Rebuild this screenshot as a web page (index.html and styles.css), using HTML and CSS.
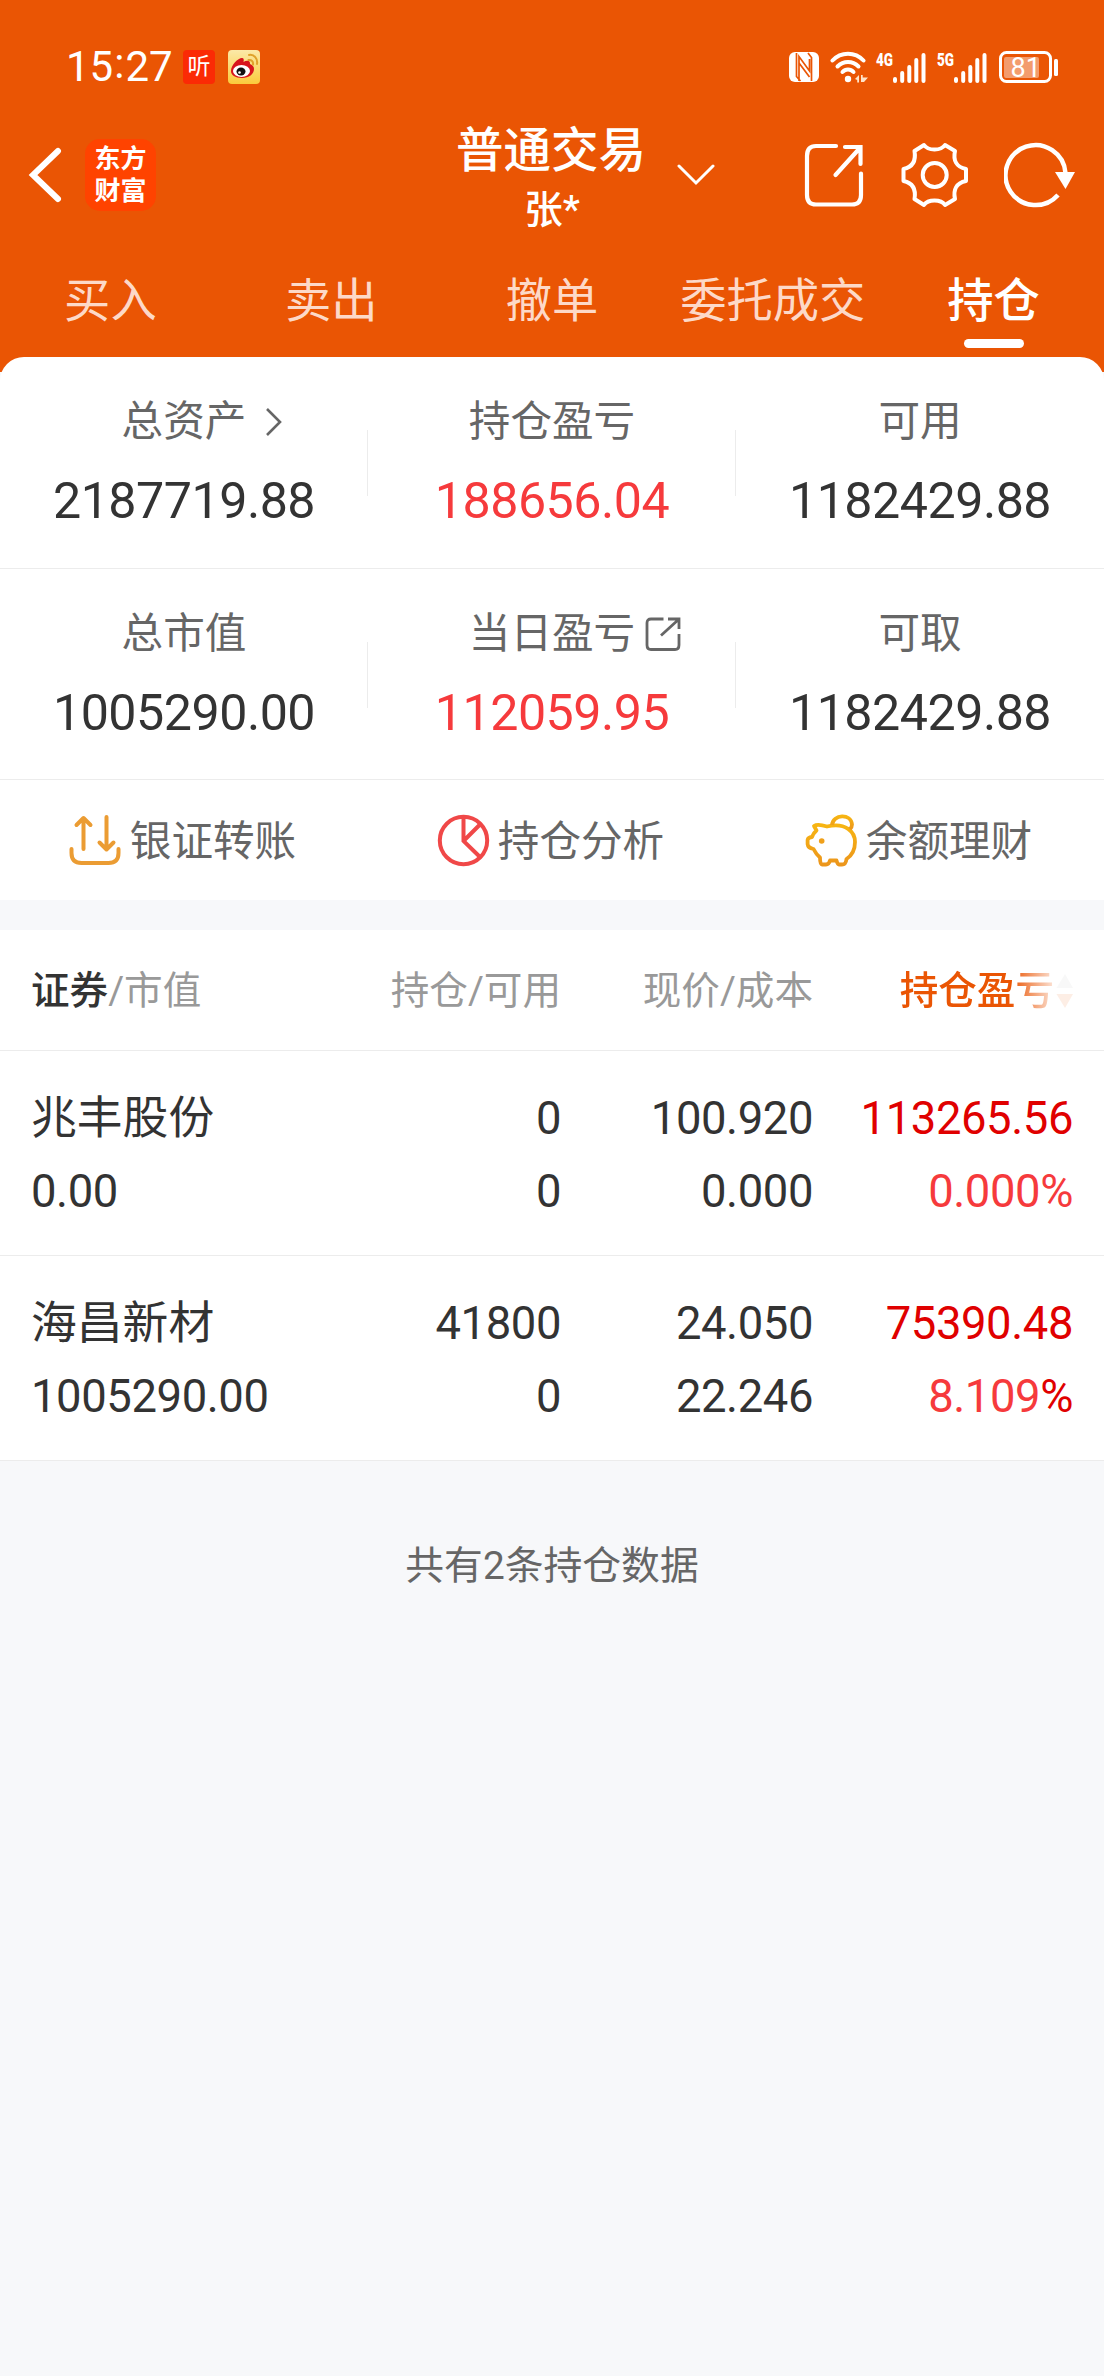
FILE: index.html
```html
<!DOCTYPE html>
<html lang="zh-CN">
  <head>
    <meta charset="UTF-8">
    <title>普通交易 - 持仓</title>
    <link rel="stylesheet" href="styles.css">
  </head>
  <body>
    <header class="header">
      <div class="status">
        <span class="time">15<span class="colon">:</span>27</span>
        <span class="app-ting">听</span>
        <svg class="app-weibo" width="32" height="34" viewBox="0 0 32 34">
          <defs>
            <linearGradient id="weibo-bg" x1="0" y1="0" x2="0" y2="1">
              <stop offset="0" stop-color="#fbe9a8"/>
              <stop offset="1" stop-color="#fbcb3c"/>
            </linearGradient>
          </defs>
          <rect width="32" height="34" rx="4" fill="url(#weibo-bg)"/>
          <path d="M3 21C3 15 10 8 14 8c2 0 2 2 1.500 4 3-2 7-2 6.500 2 3 1 4 3 4 5 0 5-5 9-12 9S3 25 3 21z" fill="#d8141c"/>
          <ellipse cx="13.500" cy="21" rx="8.500" ry="6" fill="#fff"/>
          <ellipse cx="13" cy="21.500" rx="4.500" ry="4" fill="#111"/>
          <circle cx="11.500" cy="22.500" r="1.300" fill="#fff"/>
          <path d="M20.500 10c3-.5 5 1.500 4.500 4.500M21 5c5-1 9 3.500 8 9" fill="none" stroke="#dfa12b" stroke-width="2" stroke-linecap="round"/>
        </svg>
        <div class="status-right">
          <svg width="30" height="30" viewBox="0 0 30 30">
            <rect width="30" height="30" rx="6" fill="#fff"/>
            <path d="M7.500 1v23.500l4 4.500M10 29V4.500L20.500 19V7M19 1l3.500 4.500V29M10 11l10.500 14" fill="none" stroke="#ea5504" stroke-width="1.700"/>
          </svg>
          <svg class="wifi" width="38" height="32" viewBox="0 0 38 32">
            <g fill="none" stroke="#fff" stroke-width="4" stroke-linecap="round">
              <path d="M2.500 9.500C11 .5 25 .5 33.500 9.500"/>
              <path d="M7.500 15.500c6-6 15-6 21 0"/>
              <path d="M12.500 21c3-3.500 8-3.500 11 0"/>
            </g>
            <circle cx="18" cy="28" r="3.200" fill="#fff"/>
            <path d="M25 28l4-4v7.500h-1.800V29zM31 24h1.700v2.500H38L34 31h-3z" fill="#ffe3c8"/>
          </svg>
          <svg class="signal" width="52" height="36" viewBox="-1 -2 52 36">
            <text x="0" y="15" textLength="17" lengthAdjust="spacingAndGlyphs">4G</text>
            <path d="M19 28v2M26.200 22v8M33.300 16v14M40.300 9v21M47.500 4v26"/>
          </svg>
          <svg class="signal" width="52" height="36" viewBox="-1 -2 52 36">
            <text x="0" y="15" textLength="17" lengthAdjust="spacingAndGlyphs">5G</text>
            <path d="M19 28v2M26.200 22v8M33.300 16v14M40.300 9v21M47.500 4v26"/>
          </svg>
          <svg class="battery" width="61" height="34" viewBox="0 0 61 34">
            <rect x="2.500" y="2.500" width="50" height="29" rx="6" fill="none" stroke="#fff" stroke-width="3"/>
            <rect x="6" y="7" width="35" height="21" rx="2" fill="#fff" fill-opacity=".42"/>
            <rect x="56" y="9" width="4" height="17" rx="1.500" fill="#fff"/>
            <text x="12.500" y="27">81</text>
          </svg>
        </div>
      </div>

      <div class="nav">
        <div class="nav-left">
          <svg width="34" height="56" viewBox="0 0 34 56">
            <path d="M30 4L5 28l25 24" fill="none" stroke="#fff" stroke-width="6" stroke-linecap="round" stroke-linejoin="miter"/>
          </svg>
          <div class="logo">东方<br>财富</div>
        </div>
        <div class="title">
          <div class="title-main">普通交易</div>
          <div class="title-user">张*</div>
        </div>
        <div class="nav-right">
          <svg class="arrow-down" width="38" height="22" viewBox="0 0 38 22">
            <path d="M2 2l17 17L36 2" fill="none" stroke="#fff" stroke-width="3" stroke-linecap="round"/>
          </svg>
          <svg class="icon-share" width="60" height="66" viewBox="0 0 60 66">
            <g fill="none" stroke="#fff" stroke-width="4.200" stroke-linecap="round">
              <path d="M32 4H12Q3 4 3 14v39q0 9.500 9 9.500h36q9 0 9-9.500V31.500"/>
              <path d="M41 5h15.500v17M31.500 33L55 7"/>
            </g>
          </svg>
          <svg class="icon-gear" width="70" height="66" viewBox="0 0 70 66">
            <g fill="none" stroke="#fff" stroke-width="4" stroke-linejoin="round">
              <path d="M24 3C28 9 41 9 45 3L55 9C53 18 56 25 66 27V39C56 41 53 48 55 57L45 63C41 57 28 57 24 63L14.500 57C16 48 13 41 3.500 39V27C13 25 16 18 14.500 9Z"/>
              <circle cx="34.700" cy="33" r="12"/>
            </g>
          </svg>
          <svg class="icon-refresh" width="72" height="66" viewBox="0 0 72 66">
            <path d="M54 53A30 30 0 1 1 61.500 31" fill="none" stroke="#fff" stroke-width="4.500"/>
            <path d="M51 30h20L61.500 47z" fill="#fff"/>
          </svg>
        </div>
      </div>

      <nav class="tabs">
        <a class="tab">买入</a>
        <a class="tab">卖出</a>
        <a class="tab">撤单</a>
        <a class="tab">委托成交</a>
        <a class="tab active">持仓</a>
      </nav>
    </header>

    <section class="assets">
      <div class="assets-row">
        <div class="asset">
          <div class="asset-label">总资产<svg class="more" width="18" height="30" viewBox="0 0 18 30"><path d="M2 2l13 13L2 28" fill="none" stroke="#666" stroke-width="2.600"/></svg></div>
          <div class="asset-value">2187719.88</div>
        </div>
        <div class="asset">
          <div class="asset-label">持仓盈亏</div>
          <div class="asset-value up">188656.04</div>
        </div>
        <div class="asset">
          <div class="asset-label">可用</div>
          <div class="asset-value">1182429.88</div>
        </div>
      </div>
      <div class="assets-row">
        <div class="asset">
          <div class="asset-label">总市值</div>
          <div class="asset-value">1005290.00</div>
        </div>
        <div class="asset">
          <div class="asset-label">当日盈亏<svg class="open" width="36" height="36" viewBox="0 0 36 36"><path d="M18.500 3H6Q2 3 2 7v22q0 4.500 4 4.500h24q4 0 4-4.500V18M23 3h11v10M16 19.500L33 4" fill="none" stroke="#666" stroke-width="2.800"/></svg></div>
          <div class="asset-value up">112059.95</div>
        </div>
        <div class="asset">
          <div class="asset-label">可取</div>
          <div class="asset-value">1182429.88</div>
        </div>
      </div>
      <div class="actions">
        <a class="action">
          <svg width="54" height="54" viewBox="0 0 54 54">
            <path d="M3.500 36v4q0 10 10 10h27q10 0 10-10v-4M15.500 36V5M8.500 12l7-7 7 7M38.500 4v32M31.500 29.500l7 7 7-7" fill="none" stroke="#eb9c33" stroke-width="4" stroke-linecap="round" stroke-linejoin="round"/>
          </svg>
          <span>银证转账</span>
        </a>
        <a class="action">
          <svg width="54" height="54" viewBox="0 0 54 54">
            <g fill="none" stroke="#f04848" stroke-width="4">
              <circle cx="27.500" cy="27.500" r="23.700"/>
              <path d="M27.500 4v24L44 44M27.500 28L44.500 11"/>
            </g>
          </svg>
          <span>持仓分析</span>
        </a>
        <a class="action">
          <svg width="54" height="54" viewBox="0 0 54 54">
            <defs>
              <linearGradient id="pig" x1="0" y1="0" x2="0" y2="1">
                <stop offset="0" stop-color="#f7b512"/>
                <stop offset="1" stop-color="#ec961c"/>
              </linearGradient>
            </defs>
            <g fill="none" stroke="url(#pig)" stroke-width="3.800" stroke-linejoin="round">
              <path d="M10 13C13 11 18 12 23 13.500C42 9 51 19 51 29C51 37 47 43 42.500 46C42 50 41 51.500 38 51.500H35Q33.500 51.500 32.500 47.500H26Q25 51.500 22 51.500H18Q16 51.500 16 44.500C13 42 11 39 9.500 36Q4 35 3.600 31V27Q4 24.500 8 24Q9.500 20 12.500 17.500Z"/>
              <path d="M28 12C29 1 47 0 48 11.500Q48 14 46 16"/>
            </g>
            <circle cx="17.700" cy="28" r="2.800" fill="#f0a01a"/>
          </svg>
          <span>余额理财</span>
        </a>
      </div>
    </section>

    <section class="holdings">
      <div class="row head">
        <div class="col"><b>证券</b>/市值</div>
        <div class="col">持仓/可用</div>
        <div class="col">现价/成本</div>
        <div class="col sorted">持仓盈亏<svg width="19" height="36" viewBox="0 0 19 36"><path d="M2.500 15L11 1l8 14z" fill="#bbb"/><path d="M2.500 21H19l-8 14z" fill="#ea5504"/></svg></div>
      </div>
      <div class="row">
        <div class="col"><span class="name">兆丰股份</span><br>0.00</div>
        <div class="col">0<br>0</div>
        <div class="col">100.920<br>0.000</div>
        <div class="col profit">113265.56<br><span class="rate">0.000%</span></div>
      </div>
      <div class="row">
        <div class="col"><span class="name">海昌新材</span><br>1005290.00</div>
        <div class="col">41800<br>0</div>
        <div class="col">24.050<br>22.246</div>
        <div class="col profit">75390.48<br><span class="rate">8.109</span>%</div>
      </div>
    </section>

    <p class="total">共有2条持仓数据</p>
  </body>
</html>
```

FILE: styles.css
```css
:root {
  --orange: #ea5504;
  --red: #f63a3c;
  --line: #ececec;
  --grey-bg: #f7f8fa;
}
* {
  box-sizing: border-box;
}
body {
  margin: 0;
  min-height: 2376px;
  background: var(--grey-bg);
  color: #333;
  font-family: Roboto, "Noto Sans CJK SC", sans-serif;
}
svg {
  display: block;
  flex: none;
}

/* header */
.header {
  height: 372px;
  background: var(--orange);
  color: #fff;
}
.status {
  display: flex;
  align-items: center;
  height: 114px;
  padding: 20px 45px 0 66px;
}
.time {
  width: 117px;
  font-size: 42px;
  line-height: 50px;
}
.colon {
  position: relative;
  top: -3px;
  padding: 0 1px;
}
.app-ting {
  width: 32px;
  height: 34px;
  margin-right: 13px;
  border-radius: 4px;
  background: #fb2a05;
  font-size: 23px;
  line-height: 33px;
  text-align: center;
}
.status-right {
  display: flex;
  align-items: center;
  margin-left: auto;
}
.wifi {
  margin: 0 7px 0 11px;
}
.signal {
  margin-right: 9px;
  overflow: visible;
}
.signal text {
  fill: #fff;
  font-size: 19px;
  font-weight: 900;
}
.signal path {
  stroke: #fff;
  stroke-width: 4;
  stroke-linecap: round;
}
.battery {
  margin-left: 1px;
}
.battery text {
  fill: #fff;
  font-size: 27px;
}
.nav {
  display: grid;
  grid-template-columns: 1fr auto 1fr;
  align-items: center;
  height: 122px;
}
.nav-left {
  display: flex;
  align-items: center;
  padding-left: 28px;
}
.logo {
  width: 71px;
  height: 72px;
  margin-left: 23px;
  padding-top: 4px;
  border-radius: 15px;
  background: #ff4300;
  font-size: 26px;
  font-weight: 700;
  line-height: 32px;
  text-align: center;
}
.title {
  padding-top: 4px;
  text-align: center;
}
.title-main {
  margin-left: -2px;
  font-size: 47.5px;
  font-weight: 500;
  line-height: 66px;
}
.title-user {
  font-size: 38.5px;
  font-weight: 500;
  line-height: 52px;
}
.nav-right {
  display: flex;
  align-items: center;
  padding-right: 28px;
}
.arrow-down {
  margin-left: 31px;
}
.icon-share {
  margin-left: auto;
}
.icon-gear {
  margin: 0 34px 0 36px;
}
.tabs {
  display: flex;
  padding-top: 32px;
}
.tab {
  flex: 1;
  color: #fdd9c8;
  font-size: 46.3px;
  line-height: 66px;
  text-align: center;
}
.tab.active {
  color: #fff;
  font-weight: 500;
}
.tab.active::after {
  content: "";
  display: block;
  width: 60px;
  height: 9px;
  margin: 5px auto 0;
  border-radius: 5px;
  background: #fff;
}

/* assets */
.assets {
  position: relative;
  margin-top: -15px;
  border-radius: 24px 24px 0 0;
  background: #fff;
}
.assets-row {
  display: flex;
  height: 211px;
  padding-top: 35px;
  border-bottom: 1px solid var(--line);
}
.assets-row:first-child {
  height: 212px;
}
.asset {
  flex: 1;
  text-align: center;
  background: linear-gradient(var(--line), var(--line)) no-repeat right 38px / 1px 66px;
}
.asset:last-child {
  background: none;
}
.asset-label {
  display: flex;
  align-items: center;
  justify-content: center;
  color: #666;
  font-size: 41.6px;
  line-height: 60px;
}
.more {
  margin: 0 -37px 0 19px;
}
.open {
  margin: 0 -46px 0 10px;
}
.asset-value {
  margin-top: 19px;
  font-size: 50.2px;
  letter-spacing: -.5px;
  line-height: 60px;
}
.up {
  color: var(--red);
}
.actions {
  display: flex;
  height: 120px;
}
.action {
  display: flex;
  flex: 1;
  align-items: center;
  justify-content: center;
  gap: 8px;
  padding-right: 4px;
  color: #666;
  font-size: 41.6px;
}
.action span {
  padding-bottom: 5px;
}

/* holdings */
.holdings {
  margin-top: 30px;
  background: #fff;
}
.row {
  display: grid;
  grid-template-columns: 300px 230px 252px 260px;
  height: 205px;
  padding: 31px 31px 0;
  border-bottom: 1px solid var(--line);
  font-size: 45.4px;
  letter-spacing: -.4px;
  line-height: 73px;
}
.row .col + .col {
  text-align: right;
}
.name {
  font-size: 45.8px;
  letter-spacing: 0;
}
.row.head {
  height: 121px;
  padding-top: 31px;
  color: #999;
  font-size: 38.6px;
  letter-spacing: 0;
  line-height: 60px;
}
.head b {
  color: #333;
  font-weight: 500;
}
.row .sorted {
  display: flex;
  align-items: center;
  justify-content: flex-end;
  height: 60px;
  color: var(--orange);
  font-weight: 500;
  -webkit-mask-image: linear-gradient(to left, rgba(0,0,0,.1) 16px, #000 62px);
  mask-image: linear-gradient(to left, rgba(0,0,0,.1) 16px, #000 62px);
}
.profit {
  color: #e00000;
}
.rate {
  color: var(--red);
}
.total {
  margin: 75px 0 0;
  color: #666;
  font-size: 38.8px;
  line-height: 60px;
  text-align: center;
}
```
